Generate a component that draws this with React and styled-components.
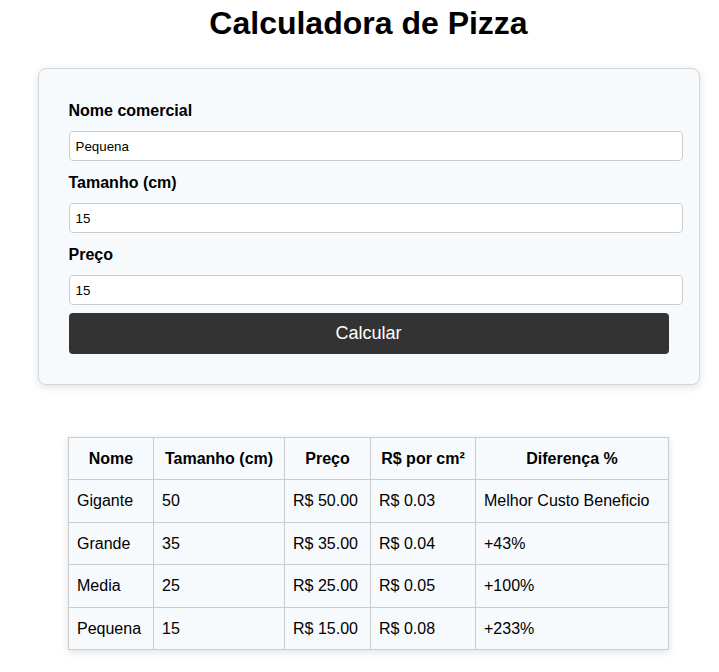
import React, { useState } from "react";
import styled, { createGlobalStyle } from "styled-components";

const GlobalStyle = createGlobalStyle`
  body {
    margin: 0;
    background: #ffffff;
    font-family: "Liberation Sans", Arial, sans-serif;
    color: #000;
  }
`;

const Page = styled.div`
  padding: 5px 0 20px 18px;
`;

const Column = styled.main`
  width: 662px;
  margin: 0 auto;
  display: flex;
  flex-direction: column;
  align-items: center;
`;

const Title = styled.h1`
  margin: 0 0 26px;
  font-size: 32px;
  font-weight: bold;
  text-align: center;
`;

const Card = styled.form`
  width: 600px;
  padding: 28px 30px 30px;
  background: #f7fafd;
  border: 1px solid #d6d6d6;
  border-radius: 8px;
  box-shadow: 0 2px 8px rgba(0, 0, 0, 0.12);
  display: flex;
  flex-direction: column;
  align-items: flex-start;
`;

const Label = styled.label`
  display: block;
  margin: 4px 0 11px;
  font-size: 16px;
  font-weight: bold;
  line-height: 19px;
`;

const Input = styled.input`
  width: 100%;
  box-sizing: content-box;
  margin: 0 0 8px;
  padding: 6px;
  height: 16px;
  font-family: "Liberation Sans", Arial, sans-serif;
  font-size: 13.33px;
  color: #000;
  background: #fff;
  border: 1px solid #cccccc;
  border-radius: 4px;
  outline: none;
`;

const Button = styled.button`
  width: 100%;
  height: 41px;
  padding: 0;
  border: none;
  border-radius: 4px;
  background: #333333;
  color: #fff;
  font-family: "Liberation Sans", Arial, sans-serif;
  font-size: 18px;
  cursor: pointer;
`;

const Table = styled.table`
  width: 600px;
  margin-top: 52px;
  border-collapse: collapse;
  background: #f7fafd;
  box-shadow: 0 2px 8px rgba(0, 0, 0, 0.12);
  font-size: 16px;
  table-layout: fixed;
`;

const Th = styled.th`
  padding: 12px 8px;
  border: 1px solid #cccccc;
  font-weight: bold;
  text-align: center;
  line-height: 17px;
`;

const Td = styled.td`
  padding: 12px 8px;
  border: 1px solid #cccccc;
  text-align: left;
  line-height: 17.5px;
  white-space: nowrap;
`;

const widths = [85, 131, 86, 105, 193];

const rows = [
  ["Gigante", "50", "R$ 50.00", "R$ 0.03", "Melhor Custo Beneficio"],
  ["Grande", "35", "R$ 35.00", "R$ 0.04", "+43%"],
  ["Media", "25", "R$ 25.00", "R$ 0.05", "+100%"],
  ["Pequena", "15", "R$ 15.00", "R$ 0.08", "+233%"],
];

const App = () => {
  const [nome, setNome] = useState("Pequena");
  const [tamanho, setTamanho] = useState("15");
  const [preco, setPreco] = useState("15");

  return (
    <Page>
      <GlobalStyle />
      <Column>
        <Title>Calculadora de Pizza</Title>
        <Card onSubmit={(e) => e.preventDefault()}>
          <Label>Nome comercial</Label>
          <Input value={nome} onChange={(e) => setNome(e.target.value)} />
          <Label>Tamanho (cm)</Label>
          <Input value={tamanho} onChange={(e) => setTamanho(e.target.value)} />
          <Label>Preço</Label>
          <Input value={preco} onChange={(e) => setPreco(e.target.value)} />
          <Button type="submit">Calcular</Button>
        </Card>
        <Table>
          <colgroup>
            {widths.map((w, i) => (
              <col key={i} style={{ width: w }} />
            ))}
          </colgroup>
          <thead>
            <tr>
              <Th>Nome</Th>
              <Th>Tamanho (cm)</Th>
              <Th>Preço</Th>
              <Th>R$ por cm²</Th>
              <Th>Diferença %</Th>
            </tr>
          </thead>
          <tbody>
            {rows.map((r) => (
              <tr key={r[0]}>
                {r.map((c, i) => (
                  <Td key={i}>{c}</Td>
                ))}
              </tr>
            ))}
          </tbody>
        </Table>
      </Column>
    </Page>
  );
};

export default App;
